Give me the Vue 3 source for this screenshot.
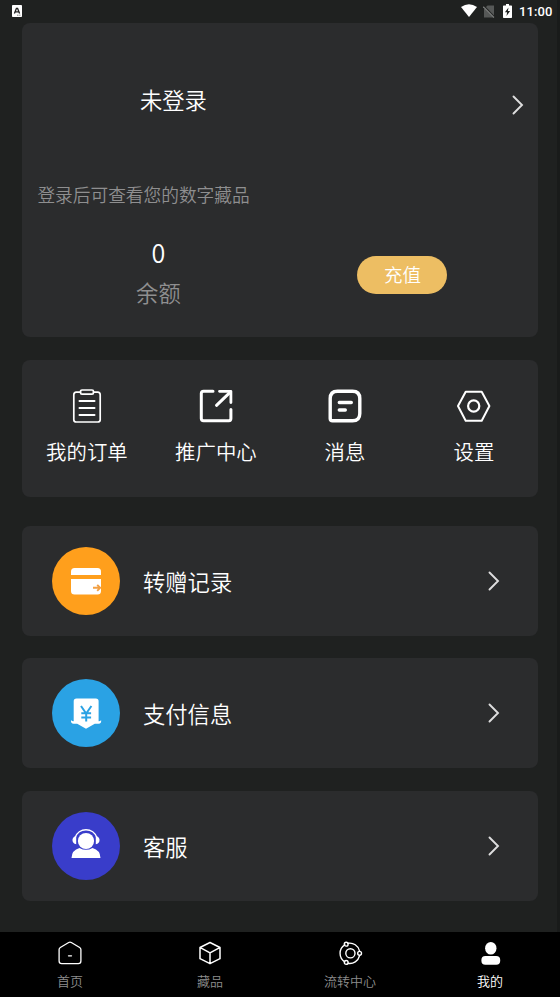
<script setup>
const shortcuts = [
  { name: 'orders', label: '我的订单' },
  { name: 'share', label: '推广中心' },
  { name: 'message', label: '消息' },
  { name: 'settings', label: '设置' },
]
const rows = [
  { name: 'transfer', label: '转赠记录' },
  { name: 'payment', label: '支付信息' },
  { name: 'service', label: '客服' },
]
const tabs = [
  { name: 'home', label: '首页' },
  { name: 'items', label: '藏品' },
  { name: 'flow', label: '流转中心' },
  { name: 'mine', label: '我的', active: true },
]
</script>

<template>
  <div class="screen">
    <header class="status">
      <svg class="badge" width="10" height="12" viewBox="0 0 10 12">
        <rect width="10" height="12" rx="0.8" fill="#fff" />
        <path d="M2.4 8.4 4.4 3.4h1.2l2 5M3.2 6.8h3.6" fill="none" stroke="#222" stroke-width="1.3" />
        <path d="M5 10.2h1.5M7.2 10.2h1.3" stroke="#555" stroke-width=".7" />
      </svg>
      <div class="system">
        <svg width="16" height="13" viewBox="0 0 16 13">
          <path d="M0 3Q8-2.6 16 3L8 13Z" fill="#fff" />
        </svg>
        <svg class="sim" width="12" height="13" viewBox="0 0 12 13">
          <path d="M4.5.5H11v12H1V4Z" fill="#565857" />
          <path d="m.8.6 11 11.600" stroke="#202221" stroke-width="1.3" />
          <path d="m.3 1.7 10.700 10.800" stroke="#777978" stroke-width="1.1" />
        </svg>
        <svg class="battery" width="9" height="14" viewBox="0 0 9 14">
          <path d="M3 0h3v1.4h2.3q.7 0 .7.7v11.2q0 .7-.7.7H.7Q0 14 0 13.300V2.100q0-.7.7-.7H3Z" fill="#fff" />
          <path d="M5.5 3.400 1.900 8.300h2.200L3.500 12l3.600-5H4.900Z" fill="#202221" />
        </svg>
        <span class="clock">11:00</span>
      </div>
    </header>

    <main class="content">
      <section class="card profile">
        <div class="account">
          <span class="name">未登录</span>
          <svg class="chevron" width="12" height="20" viewBox="0 0 12 20">
            <path d="m1.500 1.500 8.500 8.500-8.500 8.500" />
          </svg>
        </div>
        <p class="hint">登录后可查看您的数字藏品</p>
        <div class="wallet">
          <div class="balance">
            <span class="amount">0</span>
            <span class="caption">余额</span>
          </div>
          <div class="action"><button class="recharge">充值</button></div>
        </div>
      </section>

      <section class="card shortcuts">
        <div v-for="s in shortcuts" :key="s.name" class="shortcut">
          <svg class="line" width="36" height="36" viewBox="0 0 36 36">
            <g v-if="s.name === 'orders'" stroke-width="1.700">
              <path d="M11.500 4.200H7.300q-2.500 0-2.500 2.500v25q0 2.300 2.500 2.300h21.400q2.500 0 2.500-2.300v-25q0-2.500-2.500-2.500h-4.200" />
              <rect x="11.500" y="2" width="13" height="4.200" rx="1.500" />
              <path d="M10.500 13h15M10.500 20h15M10.500 27h15" stroke-width="2" />
            </g>
            <g v-else-if="s.name === 'share'" stroke-width="3">
              <path d="M15 3.300H5.600Q3.300 3.300 3.300 5.600v24.900q0 2.200 2.300 2.200h25.300q2 0 2-2.200V21.500" />
              <path d="M21.500 3.300h11.400v11.200" stroke-width="2.800" />
              <path d="M31.500 4.800 18.500 17.300" />
            </g>
            <g v-else-if="s.name === 'message'" stroke-width="3.400">
              <path d="M10.500 3.200h15q7.300 0 7.300 7.300v15q0 7.300-7.300 7.300h-20q-2.300 0-2.300-2.300v-20q0-7.300 7.300-7.300Z" />
              <path d="M12.300 14.500h12M12.300 22h6" />
            </g>
            <g v-else stroke-width="2">
              <path d="M9.700 3.700h16L33.400 18 25.700 32.700h-16L2 18Z" />
              <circle cx="17.700" cy="18" r="5.600" stroke-width="2.200" />
            </g>
          </svg>
          <span class="shortcut-label">{{ s.label }}</span>
        </div>
      </section>

      <section class="list">
        <div v-for="r in rows" :key="r.name" class="card row">
          <span class="disc" :class="r.name">
            <svg width="68" height="68" viewBox="0 0 68 68">
              <g v-if="r.name === 'transfer'">
                <path d="M19 28v-3.500Q19 21 22.500 21h23q3.500 0 3.500 3.500V28Z" fill="#fff" />
                <path d="M19 32h30v12q0 3.500-3.500 3.500h-23Q19 47.500 19 44Z" fill="#fff" />
                <path d="M41 40.800h7M45.200 37.800l3 3-3 3" fill="none" stroke="#f2a044" stroke-width="1.900" />
              </g>
              <g v-else-if="r.name === 'payment'">
                <path d="M21.700 22.300q0-2.800 2.800-2.800h19.300q2.800 0 2.800 2.800v20q2 0 2.500-1.300.6 3.500-2.500 3.700h-3.800l-8.800 5-8.800-5h-3.500q-3.200-.2-2.700-3.700.6 1.300 2.700 1.300Z" fill="#fff" />
                <path d="m29 27 5.200 7.500L39.400 27M34.200 34.500v8M29.300 34.300h9.800M29.300 38.500h9.800" fill="none" stroke="#2aa2e4" stroke-width="2" />
              </g>
              <g v-else fill="#fff">
                <circle cx="34" cy="29" r="8.100" />
                <path d="M23.200 25.500a11.400 11.400 0 0 1 21.600 0" fill="none" stroke="#fff" stroke-width="1.400" />
                <path d="M24.200 24c-5 .5-5 7.600 0 8.200ZM43.800 24c5 .5 5 7.600 0 8.200Z" />
                <path d="M19.500 46q.2-8 8-10.100 6.500 3.700 13 0 7.800 2.100 8 10.100Z" />
              </g>
            </svg>
          </span>
          <span class="row-label">{{ r.label }}</span>
          <svg class="chevron" width="12" height="20" viewBox="0 0 12 20">
            <path d="m1.500 1.500 8.500 8.500-8.500 8.500" />
          </svg>
        </div>
      </section>
    </main>

    <nav class="tabs">
      <div v-for="t in tabs" :key="t.name" class="tab" :class="{ active: t.active }">
        <svg class="line" width="26" height="26" viewBox="0 0 26 26">
          <g v-if="t.name === 'home'" stroke-width="1.300">
            <path d="M11.700 2.500 3.300 7.500q-1.200.8-1.200 2.100V21q0 2.600 2.600 2.600h16.600q2.600 0 2.600-2.600V9.600q0-1.300-1.200-2.100L14.300 2.500q-1.300-.8-2.600 0Z" />
            <path d="M11.500 15.800h3" />
          </g>
          <g v-else-if="t.name === 'items'" stroke-width="1.500">
            <path d="m13 2.500 10 5v11.200l-10 5-10-5V7.500ZM3.300 7.700l9.700 5.200 9.700-5.200M13 12.900v10.500" />
          </g>
          <g v-else-if="t.name === 'flow'" stroke-width="1.400" transform="translate(.7 0)">
            <path d="M7.100 4.800a10 10 0 0 0 0 17M10.300 3.300a10 10 0 0 1 11.500 7.500M21.800 15.800a10 10 0 0 1-11.500 7.500" />
            <circle cx="12.700" cy="13.300" r="4.600" />
            <circle cx="8.500" cy="4.200" r="1.900" />
            <circle cx="21.900" cy="13.300" r="1.900" />
            <circle cx="8.500" cy="22.400" r="1.900" />
          </g>
          <g v-else fill="#fff" stroke="none">
            <ellipse cx="13.800" cy="8.200" rx="5.700" ry="6.300" />
            <rect x="4.400" y="16" width="18.800" height="8.800" rx="4" />
          </g>
        </svg>
        <span class="tab-label">{{ t.label }}</span>
      </div>
    </nav>
  </div>
</template>

<style>
body {
  margin: 0;
  background: #1f2120;
}
</style>

<style scoped>
.screen {
  box-sizing: border-box;
  width: 560px;
  height: 997px;
  display: flex;
  flex-direction: column;
  background: linear-gradient(to right, #1f2120 557px, #191b1a 557px);
  color: #fff;
  font-family: "Noto Sans CJK SC DemiLight", "Noto Sans CJK SC", sans-serif;
  font-weight: 350;
  overflow: hidden;
}
.status {
  height: 22.500px;
  flex: none;
  display: flex;
  justify-content: space-between;
  align-items: flex-start;
  padding: 0 7.500px 0 12px;
}
.badge {
  margin-top: 5px;
}
.system {
  display: flex;
  align-items: flex-start;
  padding-top: 4px;
}
.sim {
  margin: 1px 0 0 6px;
}
.battery {
  margin-left: 8px;
}
.clock {
  margin-left: 7px;
  font: 500 13px/16px Roboto, sans-serif;
  letter-spacing: 0.100px;
}
.content {
  flex: 1;
  display: flex;
  flex-direction: column;
  padding: 0 21.600px 0 22.400px;
}
.card {
  box-sizing: border-box;
  background: #2b2c2d;
  border-radius: 8px;
}
.profile {
  height: 314.500px;
}
.account {
  height: 152px;
  display: flex;
  align-items: center;
  justify-content: space-between;
  padding: 6px 14px 0 117.500px;
  box-sizing: border-box;
}
.name {
  font-size: 22.300px;
  line-height: 32px;
  margin-top: -6px;
}
.chevron {
  flex: none;
  fill: none;
  stroke: #dedede;
  stroke-width: 1.900;
  stroke-linecap: round;
}
.account .chevron {
  margin-top: 6px;
}
.hint {
  margin: 6px 0 0 15px;
  font-size: 17.700px;
  line-height: 26px;
  color: #8f8f90;
}
.wallet {
  display: grid;
  grid-template-columns: 272px 1fr;
  margin-top: 26px;
}
.balance {
  display: flex;
  flex-direction: column;
  align-items: center;
}
.amount {
  font-size: 27px;
  line-height: 38px;
  font-weight: 400;
  transform: scaleX(0.930);
}
.caption {
  font-size: 22.300px;
  line-height: 32px;
  margin-top: 5px;
  color: #8f8f90;
}
.action {
  padding: 23px 0 0 63px;
}
.recharge {
  display: block;
  width: 90px;
  height: 38px;
  border: 0;
  border-radius: 19px;
  padding: 0 0 2px;
  background: #edbe63;
  color: #fff;
  font: inherit;
  font-size: 18.500px;
  line-height: 36px;
}
.shortcuts {
  display: grid;
  grid-template-columns: repeat(4, 1fr);
  height: 137px;
  margin-top: 23px;
  padding-top: 28px;
}
.shortcut {
  display: flex;
  flex-direction: column;
  align-items: center;
}
.line {
  fill: none;
  stroke: #fff;
  stroke-linecap: round;
  stroke-linejoin: round;
}
.shortcut-label {
  margin-top: 12px;
  font-size: 20.400px;
  line-height: 30px;
}
.list {
  display: flex;
  flex-direction: column;
  gap: 22.500px;
  margin-top: 28.500px;
}
.row {
  height: 110.200px;
  display: flex;
  align-items: center;
  padding: 0 38.500px 0 29.600px;
}
.disc {
  width: 68px;
  height: 68px;
  border-radius: 50%;
}
.disc svg {
  display: block;
}
.transfer {
  background: #ff9f1c;
}
.payment {
  background: #2aa2e4;
}
.service {
  background: #393dca;
}
.row-label {
  flex: 1;
  margin-left: 23px;
  font-size: 22.300px;
  line-height: 32px;
}
.tabs {
  flex: none;
  height: 65px;
  display: grid;
  grid-template-columns: repeat(4, 1fr);
  background: #000;
}
.tab {
  display: flex;
  flex-direction: column;
  align-items: center;
  padding-top: 8px;
}
.tab-label {
  margin-top: 5px;
  font-size: 13px;
  line-height: 20px;
  color: #8c8c8c;
}
.active .tab-label {
  color: #fff;
}
</style>
